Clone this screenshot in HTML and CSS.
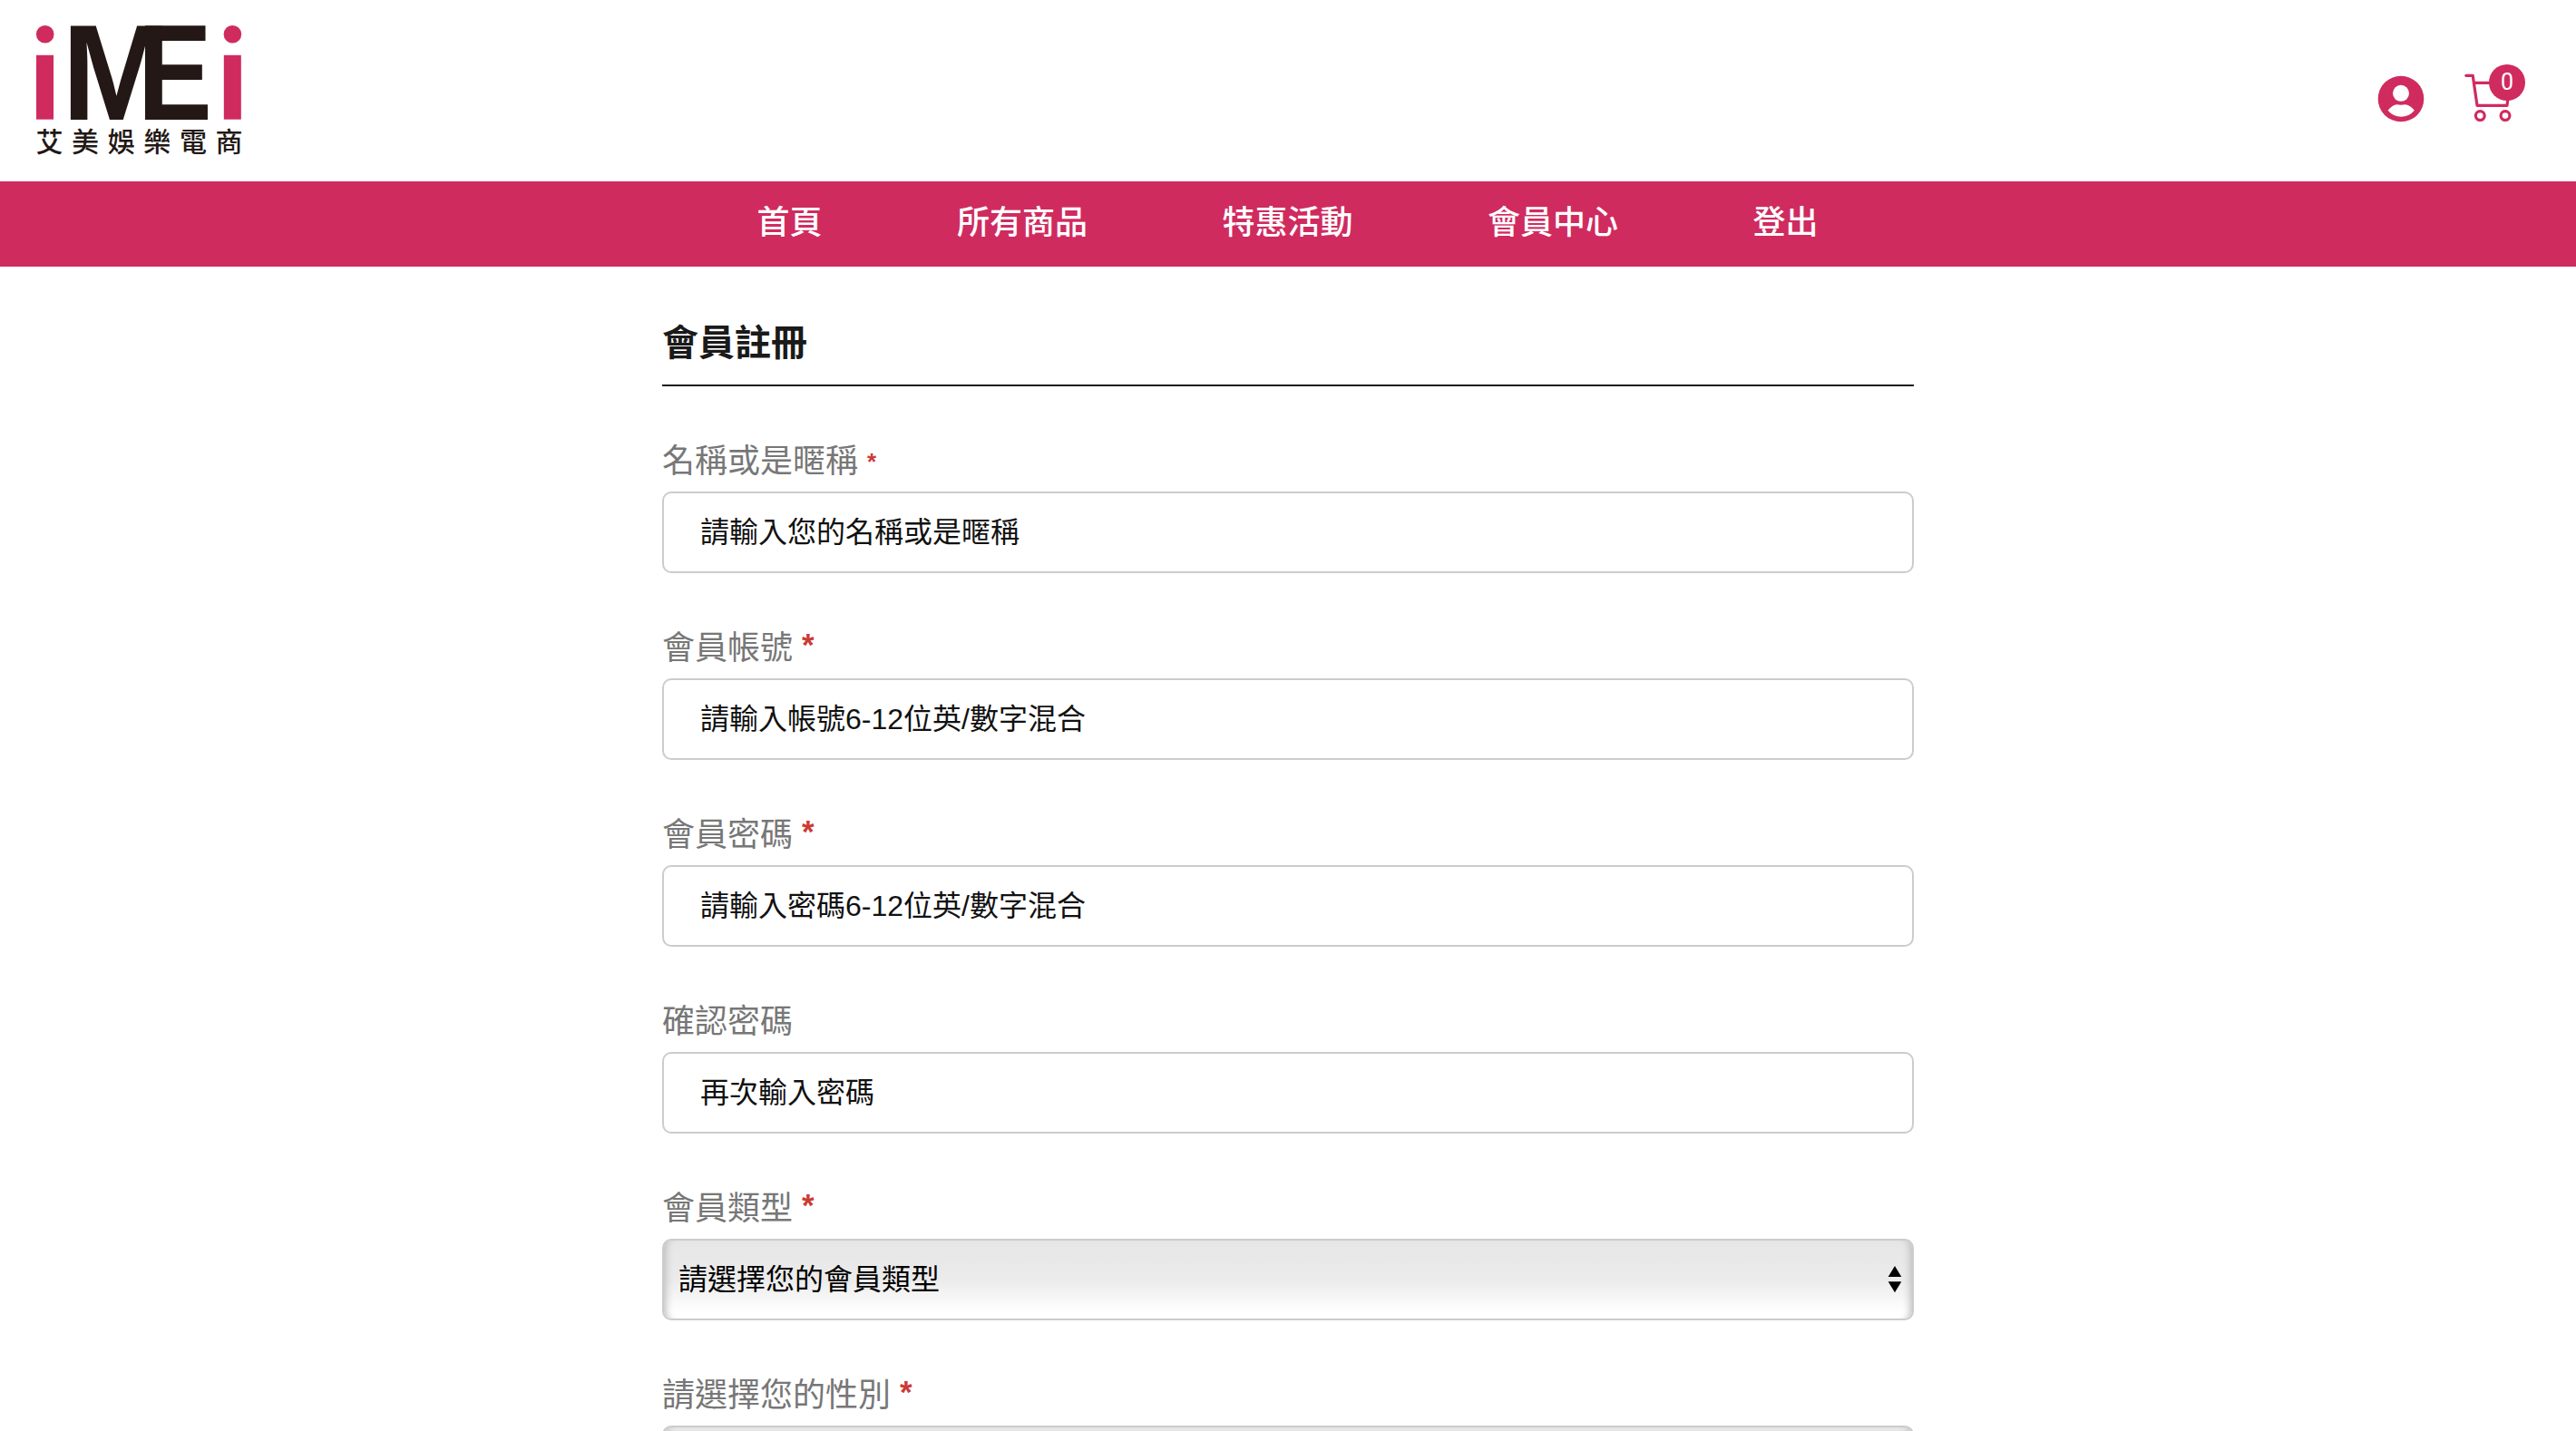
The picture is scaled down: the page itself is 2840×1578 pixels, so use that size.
FILE: index.html
```html
<!DOCTYPE html>
<html lang="zh-TW">
<head>
  <meta charset="UTF-8">
  <meta name="viewport" content="width=device-width, initial-scale=1.0">
  <title>會員註冊</title>
  <link rel="stylesheet" href="styles.css">
</head>
<body>

  <header class="header">
    <a href="#" class="logo">
      <svg width="260" height="180" viewBox="20 10 260 180">
        <g class="logo-i">
          <circle cx="49.7" cy="37.8" r="9.8"/>
          <rect x="40" y="60.8" width="19" height="70.9"/>
          <circle cx="256.4" cy="37.8" r="9.8"/>
          <rect x="246.8" y="60.8" width="19" height="70.9"/>
        </g>
        <g class="logo-me">
          <text transform="translate(68.3 131.7) scale(.962 1)">M</text>
          <text transform="translate(151.7 131.7) scale(.82 1)">E</text>
        </g>
        <text class="logo-name" x="39.5" y="166.5">艾美娛樂電商</text>
      </svg>
    </a>
    <div class="header-icons">
      <a href="#" class="user">
        <svg width="52" height="52" viewBox="0 0 52 52">
          <circle cx="26" cy="26" r="25.3" fill="#cf2b5f"/>
          <circle cx="26" cy="19.8" r="9" fill="#fff"/>
          <path d="M11.6 38.8Q17 32.3 21.3 32.3Q26 33.2 30.7 32.3Q35.5 32.3 40.9 38.8Q35 45.8 26.2 45.8Q17.5 45.8 11.6 38.8Z" fill="#fff"/>
        </svg>
      </a>
      <a href="#" class="cart">
        <svg width="52" height="56" viewBox="0 0 52 56" fill="none" stroke="#cf2b5f" stroke-width="3.2" stroke-linecap="round" stroke-linejoin="round">
          <path d="M1.8 5.3H9.2L14 38.3H47L50.3 13.4H10.4"/>
          <circle cx="17.3" cy="49.6" r="4.9"/>
          <circle cx="45" cy="49.6" r="4.9"/>
        </svg>
        <span class="cart-num">0</span>
      </a>
    </div>
  </header>

  <nav class="nav">
    <a href="#">首頁</a>
    <a href="#">所有商品</a>
    <a href="#">特惠活動</a>
    <a href="#">會員中心</a>
    <a href="#">登出</a>
  </nav>

  <main class="container">
    <h1 class="title">會員註冊</h1>
    <form>
      <div class="form-group">
        <label for="name">名稱或是暱稱 <span class="required small">*</span></label>
        <input type="text" id="name" placeholder="請輸入您的名稱或是暱稱">
      </div>
      <div class="form-group">
        <label for="account">會員帳號 <span class="required">*</span></label>
        <input type="text" id="account" placeholder="請輸入帳號6-12位英/數字混合">
      </div>
      <div class="form-group">
        <label for="password">會員密碼 <span class="required">*</span></label>
        <input type="password" id="password" placeholder="請輸入密碼6-12位英/數字混合">
      </div>
      <div class="form-group">
        <label for="password2">確認密碼</label>
        <input type="password" id="password2" placeholder="再次輸入密碼">
      </div>
      <div class="form-group">
        <label for="type">會員類型 <span class="required">*</span></label>
        <div class="select">
          <select id="type">
            <option>請選擇您的會員類型</option>
          </select>
          <svg class="arrows" width="16" height="30" viewBox="0 0 16 30"><path d="M8 0L15.3 12H.7ZM.7 17.3H15.3L8 29.3Z"/></svg>
        </div>
      </div>
      <div class="form-group">
        <label for="gender">請選擇您的性別 <span class="required">*</span></label>
        <div class="select">
          <select id="gender"></select>
        </div>
      </div>
    </form>
  </main>

</body>
</html>
```

FILE: styles.css
```css
:root {
  --primary: #cf2b5f;
  --text: #1a1a1a;
  --border: #ccc;
}
* {
  box-sizing: border-box;
}
body {
  margin: 0;
  height: 100vh;
  overflow: hidden;
  background: #fff;
  color: var(--text);
  font-family: "Liberation Sans", "Noto Sans CJK TC", sans-serif;
}
a {
  color: inherit;
  text-decoration: none;
}

/* header */
.header {
  display: flex;
  justify-content: space-between;
  height: 200px;
  padding: 10px 20px;
}
.logo svg {
  display: block;
  overflow: visible;
}
.logo-i {
  fill: var(--primary);
}
.logo-me {
  font: bold 150px "Liberation Sans", sans-serif;
  fill: #231815;
}
.logo-name {
  font: 500 30px "Noto Sans CJK TC", sans-serif;
  letter-spacing: 9.6px;
  fill: #231815;
}
.header-icons {
  display: flex;
  gap: 44px;
  padding: 68px 51px 0 0;
}
.header-icons svg {
  display: block;
}
.user {
  padding-top: 5px;
}
.cart {
  position: relative;
}
.cart-num {
  position: absolute;
  top: -7px;
  left: 27px;
  width: 40px;
  height: 40px;
  border-radius: 50%;
  background: var(--primary);
  color: #fff;
  font: 25px/40px Roboto, sans-serif;
  text-align: center;
}

/* nav */
.nav {
  display: flex;
  justify-content: center;
  gap: 148.5px;
  height: 94px;
  padding-right: 1px;
  background: var(--primary);
  color: #fff;
  font-size: 36px;
  font-weight: 500;
  line-height: 92px;
}

/* form */
.container {
  width: 1380px;
  margin: 0 auto;
}
.title {
  margin: 0 0 52px;
  padding-top: 51px;
  height: 132px;
  border-bottom: 2px solid var(--text);
  font-size: 40px;
  line-height: 66px;
}
.form-group {
  height: 206px;
}
label {
  display: block;
  height: 64px;
  color: #777;
  font-size: 36px;
  line-height: 61px;
}
.required {
  color: #cb3b36;
  font-size: 35px;
  font-weight: bold;
  line-height: 1;
  vertical-align: 4px;
}
.required.small {
  font-size: 26px;
  vertical-align: 3px;
}
input,
select {
  display: block;
  width: 100%;
  height: 90px;
  border: 2px solid var(--border);
  border-radius: 10px;
  background: #fff;
  color: #000;
  font-family: inherit;
  font-size: 32px;
}
input {
  padding: 1px 40px 0;
}
input::placeholder {
  color: #111;
  opacity: 1;
}
.select {
  position: relative;
}
select {
  appearance: none;
  padding: 0 16px;
  background: linear-gradient(#e6e6e6, #ebebeb 50%, #fff 92%);
  box-shadow: inset 10px 0 8px -8px #bbb, inset -10px 0 8px -8px #bbb;
}
.arrows {
  position: absolute;
  top: 30px;
  right: 13px;
}
```
